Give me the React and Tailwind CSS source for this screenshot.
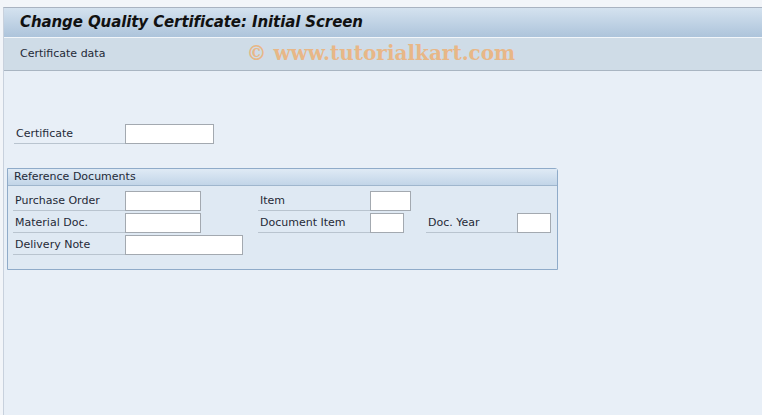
import React from 'react';

const font = { fontFamily: '"DejaVu Sans", sans-serif' };

const Field = ({ label, labelW, inputW, className = '' }) => (
    <div className={`flex items-center h-[22px] ${className}`}>
        <div className={`h-[20px] flex items-end border-b border-[#b9c4cf] ${labelW}`}>
            <span className="pl-[2px] text-[11px] leading-[18px] text-[#1f2a37]">{label}</span>
        </div>
        <div className={`h-[20px] bg-white border border-[#a3a9b0] ${inputW}`} />
    </div>
);

const App = () => {
    return (
        <div className="w-[762px] h-[415px] bg-[#f2f5f9] overflow-hidden flex flex-col" style={font}>
            <div className="h-[7px]" />
            <div className="flex-1 ml-[3px] border-l border-[#c8d1dd] border-t border-t-[#a9b3c1] bg-[#e8eff7] flex flex-col">
                <div className="h-[30px] bg-gradient-to-b from-[#d4e2ef] to-[#adc4db] border-b border-[#f2f6fa] flex items-center pl-[16px]">
                    <h1 className="text-[15px] font-bold italic text-[#111] tracking-[-0.1px]">Change Quality Certificate: Initial Screen</h1>
                </div>
                <div className="h-[33px] bg-[#cfdce7] border-b border-[#a9b5c2] flex items-center pl-[16px]">
                    <span className="text-[11px] text-[#1f2a37]">Certificate data</span>
                    <span
                        className="ml-[141px] mt-[-2px] text-[20px] font-bold text-[#e8b787]"
                        style={{ fontFamily: '"DejaVu Serif", serif' }}
                    >
                        © www.tutorialkart.com
                    </span>
                </div>

                <div className="pl-[9px] pt-[52px]">
                    <Field label="Certificate" labelW="w-[111px]" inputW="w-[89px]" className="ml-[1px]" />
                </div>

                <div className="ml-[3px] mt-[23px] w-[551px] h-[102px] border border-[#8fabc9] rounded-tr-[3px] bg-[#dfe9f3] flex flex-col">
                    <div className="h-[17px] bg-gradient-to-b from-[#dfeaf5] to-[#c2d5e8] border-b border-[#9fb6cd] flex items-center pl-[6px]">
                        <span className="text-[11px] text-[#1f2a37]">Reference Documents</span>
                    </div>
                    <div className="flex pl-[5px] pt-[4px]">
                        <div className="flex flex-col w-[245px]">
                            <Field label="Purchase Order" labelW="w-[112px]" inputW="w-[76px]" />
                            <Field label="Material Doc." labelW="w-[112px]" inputW="w-[76px]" />
                            <Field label="Delivery Note" labelW="w-[112px]" inputW="w-[118px]" />
                        </div>
                        <div className="flex flex-col w-[168px]">
                            <Field label="Item" labelW="w-[112px]" inputW="w-[41px]" />
                            <Field label="Document Item" labelW="w-[112px]" inputW="w-[34px]" />
                        </div>
                        <div className="flex flex-col">
                            <div className="h-[22px]" />
                            <Field label="Doc. Year" labelW="w-[91px]" inputW="w-[34px]" />
                        </div>
                    </div>
                </div>
            </div>
        </div>
    );
};

export default App;
